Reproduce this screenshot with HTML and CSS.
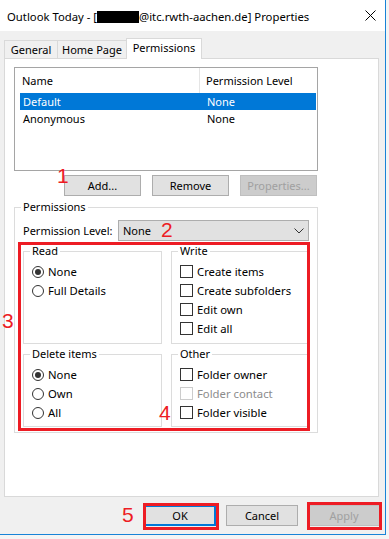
FILE: index.html
```html
<!DOCTYPE html>
<html>
<head>
<meta charset="utf-8">
<link rel="stylesheet" href="styles.css">
</head>
<body>
<div class="window">
  <div class="titlebar">
    <span class="title">Outlook Today - [<span class="redact"></span>@itc.rwth-aachen.de] Properties</span>
    <svg class="close" width="11" height="11" viewBox="0 0 11 11"><path d="M0.5 0.5L10.5 10.5M10.5 0.5L0.5 10.5" stroke="#000" stroke-width="1" fill="none"/></svg>
  </div>
  <div class="client">
    <div class="tabs">
      <div class="tab t-general">General</div>
      <div class="tab t-home">Home Page</div>
      <div class="tab t-perm active">Permissions</div>
    </div>
    <div class="panel">
      <div class="listview">
        <div class="lv-head">
          <div class="h-name">Name</div>
          <div class="h-level">Permission Level</div>
        </div>
        <div class="lv-row selected"><span class="c-name">Default</span><span class="c-level">None</span></div>
        <div class="lv-row"><span class="c-name">Anonymous</span><span class="c-level">None</span></div>
      </div>
      <div class="btn-row">
        <button class="btn">Add...</button>
        <button class="btn">Remove</button>
        <button class="btn disabled">Properties...</button>
      </div>
      <fieldset class="perms">
        <legend>Permissions</legend>
        <div class="level-row">
          <span class="level-label">Permission Level:</span>
          <div class="combo"><span>None</span>
            <svg class="chev" width="10" height="6" viewBox="0 0 10 6"><path d="M0.5 0.5L5 5L9.5 0.5" stroke="#333" stroke-width="1" fill="none"/></svg>
          </div>
        </div>
        <div class="groups">
          <fieldset class="group g-top">
            <legend>Read</legend>
            <div class="opt"><span class="radio checked"></span>None</div>
            <div class="opt"><span class="radio"></span>Full Details</div>
          </fieldset>
          <fieldset class="group g-top">
            <legend>Write</legend>
            <div class="opt"><span class="check"></span>Create items</div>
            <div class="opt"><span class="check"></span>Create subfolders</div>
            <div class="opt"><span class="check"></span>Edit own</div>
            <div class="opt"><span class="check"></span>Edit all</div>
          </fieldset>
          <fieldset class="group g-bottom">
            <legend>Delete items</legend>
            <div class="opt"><span class="radio checked"></span>None</div>
            <div class="opt"><span class="radio"></span>Own</div>
            <div class="opt"><span class="radio"></span>All</div>
          </fieldset>
          <fieldset class="group g-bottom">
            <legend>Other</legend>
            <div class="opt"><span class="check"></span>Folder owner</div>
            <div class="opt disabled"><span class="check"></span>Folder contact</div>
            <div class="opt"><span class="check"></span>Folder visible</div>
          </fieldset>
        </div>
      </fieldset>
    </div>
    <div class="footer">
      <button class="btn fbtn default">OK</button>
      <button class="btn fbtn">Cancel</button>
      <button class="btn fbtn disabled">Apply</button>
    </div>
  </div>

  <div class="mark box-main"></div>
  <div class="mark box-ok"></div>
  <div class="mark box-apply"></div>
  <span class="num n1">1</span>
  <span class="num n2">2</span>
  <span class="num n3">3</span>
  <span class="num n4">4</span>
  <span class="num n5">5</span>
</div>
</body>
</html>
```
FILE: styles.css
```css
* { box-sizing: border-box; }
html, body { margin: 0; padding: 0; }
body {
  background: #f4f4f4;
  font-family: "Noto Sans", "Open Sans", sans-serif;
  font-size: 11px;
  color: #000;
  width: 389px;
  height: 539px;
  overflow: hidden;
}
.window {
  position: relative;
  width: 386px;
  height: 535px;
  border-right: 1px solid #1883d7;
  border-bottom: 1px solid #1883d7;
  background: #f0f0f0;
  display: flex;
  flex-direction: column;
}
.titlebar {
  height: 31px;
  flex: none;
  background: #fff;
  display: flex;
  align-items: center;
  justify-content: space-between;
  padding: 2px 9px 0 7px;
  font-size: 11.3px;
}
.title { white-space: nowrap; }
.redact {
  display: inline-block;
  width: 42px;
  height: 12px;
  background: #000;
  vertical-align: -2px;
}
.close { display: block; margin-top: -2px; }

.client {
  flex: 1;
  padding: 7px 5px 0 4px;
}
.tabs {
  display: flex;
  align-items: flex-end;
  height: 20px;
}
.tab {
  height: 18px;
  border: 1px solid #d9d9d9;
  border-bottom: none;
  margin-right: -1px;
  background: #f0f0f0;
  text-align: center;
  line-height: 18px;
  white-space: nowrap;
}
.t-general { width: 54px; }
.t-home { width: 70px; }
.t-perm { width: 76px; }
.tab.active {
  height: 21px;
  margin-bottom: -1px;
  background: #fff;
  position: relative;
  z-index: 1;
  line-height: 18px;
}
.panel {
  width: 375px;
  height: 439px;
  background: #fff;
  border: 1px solid #d9d9d9;
  padding: 8px 0 0 9px;
}
.listview {
  width: 304px;
  height: 104px;
  border: 1px solid #a5a5a5;
  background: #fff;
}
.lv-head {
  display: flex;
  height: 25px;
  line-height: 25px;
}
.h-name {
  width: 185px;
  padding-left: 7px;
  border-right: 1px solid #e5e5e5;
}
.h-level { padding-left: 6px; }
.lv-row {
  display: flex;
  height: 17px;
  line-height: 17px;
  margin: 0 1px 0 5px;
}
.lv-row.selected { background: #0078d7; color: #fff; }
.c-name { width: 181px; padding-left: 3px; }
.c-level { padding-left: 6px; }

.btn-row {
  display: flex;
  justify-content: flex-end;
  gap: 11px;
  width: 303px;
  margin-top: 4px;
}
.btn {
  width: 77px;
  height: 21px;
  border: 1px solid #adadad;
  background: #e1e1e1;
  font: inherit;
  color: #000;
  padding: 0;
  margin: 0;
  line-height: 18px;
}
.btn.disabled {
  background: #cccccc;
  border-color: #bfbfbf;
  color: #a0a0a0;
}

.perms {
  margin: 3px 0 0 0;
  width: 304px;
  height: 234px;
  border: 1px solid #dcdcdc;
  padding: 0 0 0 8px;
  min-width: 0;
}
legend {
  padding: 0 2px;
  margin-left: -2px;
  line-height: 16px;
}
.level-row {
  display: flex;
  align-items: center;
  margin-top: 5px;
}
.level-label { width: 95px; white-space: nowrap; }
.combo {
  width: 191px;
  height: 21px;
  border: 1px solid #adadad;
  background: #e1e1e1;
  display: flex;
  align-items: center;
  justify-content: space-between;
  padding: 0 4px 0 4px;
}
.chev { display: block; }

.groups {
  display: grid;
  grid-template-columns: 139px 138px;
  grid-template-rows: 101px 81px;
  column-gap: 9px;
  row-gap: 2px;
  margin-top: 2px;
}
.group {
  margin: 0;
  min-width: 0;
  border: 1px solid #dcdcdc;
  padding: 3px 0 0 8px;
}
.opt {
  display: flex;
  align-items: center;
  height: 19px;
  white-space: nowrap;
  font-size: 11.3px;
}
.radio {
  width: 12px;
  height: 12px;
  border: 1px solid #333;
  border-radius: 50%;
  background: #fff;
  margin-right: 4px;
  display: flex;
  align-items: center;
  justify-content: center;
  flex: none;
}
.radio.checked::after {
  content: "";
  width: 6px;
  height: 6px;
  border-radius: 50%;
  background: #333;
}
.check {
  width: 13px;
  height: 13px;
  border: 1px solid #333;
  background: #fff;
  margin-right: 4px;
  flex: none;
}
.opt.disabled { color: #8c8c8c; }
.opt.disabled .check { border-color: #cccccc; }

.footer {
  display: flex;
  justify-content: flex-end;
  gap: 10px;
  margin-top: 8px;
}
.fbtn { width: 72px; }
.fbtn.default {
  border-color: #0078d7;
  box-shadow: inset 0 0 0 1px #0078d7;
}

.mark {
  position: absolute;
  border: 3px solid #ed1c24;
}
.box-main { left: 18px; top: 242px; width: 292px; height: 189px; }
.box-ok { left: 143px; top: 503px; width: 76px; height: 27px; }
.box-apply { left: 307px; top: 502px; width: 75px; height: 28px; }
.num {
  position: absolute;
  font-family: "Liberation Sans", sans-serif;
  font-size: 21px;
  line-height: 21px;
  color: #ed1c24;
}
.n1 { left: 57px; top: 165px; }
.n2 { left: 161px; top: 219px; }
.n3 { left: 2px; top: 310px; }
.n4 { left: 159px; top: 402px; }
.n5 { left: 122px; top: 504px; }
```
